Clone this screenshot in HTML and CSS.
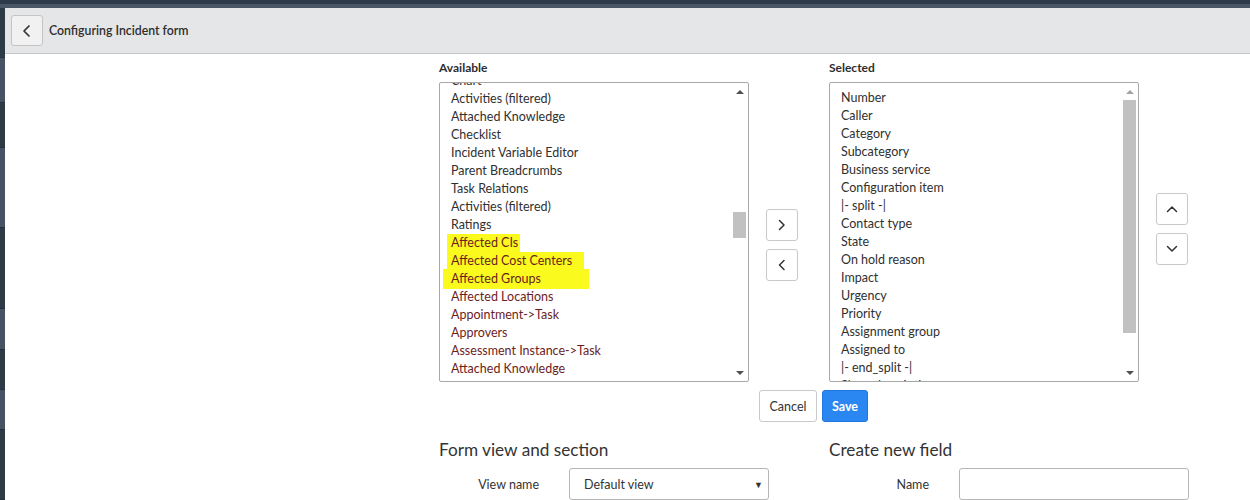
FILE: index.html
```html
<!DOCTYPE html>
<html lang="en">
<head>
  <meta charset="UTF-8" />
  <title>Configuring Incident form</title>
  <link rel="stylesheet" href="styles.css">
</head>
<body>
  <div class="topbar"></div>
  <div class="subbar"></div>
  <div class="page">
    <div class="side-strip">
      <div class="seg dark" style="height:50px"></div>
      <div class="seg light" style="height:45px"></div>
      <div class="seg dark" style="height:45px"></div>
      <div class="seg light" style="height:80px"></div>
      <div class="seg dark" style="height:82px"></div>
      <div class="seg light" style="height:40px"></div>
      <div class="seg dark" style="height:40px"></div>
      <div class="seg light" style="height:40px"></div>
      <div class="seg dark" style="height:70px"></div>
    </div>
    <div class="main">
      <div class="header">
        <button class="back-btn" title="Back">
          <svg width="14" height="14" viewBox="0 0 14 14">
            <polyline points="9,2 4,7 9,12" fill="none" stroke="#333" stroke-width="1.7" stroke-linecap="round" stroke-linejoin="round"/>
          </svg>
        </button>
        <div class="title">Configuring Incident form</div>
      </div>

      <div class="content">
        <div class="slush">
          <div class="col">
            <div class="col-label">Available</div>
            <div class="listbox">
              <div class="list available">
                <div class="item">Chart</div>
                <div class="item">Activities (filtered)</div>
                <div class="item">Attached Knowledge</div>
                <div class="item">Checklist</div>
                <div class="item">Incident Variable Editor</div>
                <div class="item">Parent Breadcrumbs</div>
                <div class="item">Task Relations</div>
                <div class="item">Activities (filtered)</div>
                <div class="item">Ratings</div>
                <div class="item ref"><span class="hl hl-1">Affected CIs</span></div>
                <div class="item ref"><span class="hl hl-2">Affected Cost Centers</span></div>
                <div class="item ref"><span class="hl hl-3">Affected Groups</span></div>
                <div class="item ref">Affected Locations</div>
                <div class="item ref">Appointment-&gt;Task</div>
                <div class="item ref">Approvers</div>
                <div class="item ref">Assessment Instance-&gt;Task</div>
                <div class="item ref">Attached Knowledge</div>
              </div>
              <div class="scrollbar">
                <div class="arrow"><span class="tri-up"></span></div>
                <div class="track"><div class="thumb" style="margin-top:112px;height:26px"></div></div>
                <div class="arrow"><span class="tri-down"></span></div>
              </div>
            </div>
          </div>

          <div class="move-btns mid">
            <button class="icon-btn" title="Add">
              <svg width="12" height="12" viewBox="0 0 12 12"><polyline points="3.5,1.5 8,6 3.5,10.5" fill="none" stroke="#333" stroke-width="1.5" stroke-linecap="round" stroke-linejoin="round"/></svg>
            </button>
            <button class="icon-btn" title="Remove">
              <svg width="12" height="12" viewBox="0 0 12 12"><polyline points="8,1.5 3.5,6 8,10.5" fill="none" stroke="#333" stroke-width="1.5" stroke-linecap="round" stroke-linejoin="round"/></svg>
            </button>
          </div>

          <div class="col">
            <div class="col-label">Selected</div>
            <div class="listbox">
              <div class="list selected">
                <div class="item">Number</div>
                <div class="item">Caller</div>
                <div class="item">Category</div>
                <div class="item">Subcategory</div>
                <div class="item">Business service</div>
                <div class="item">Configuration item</div>
                <div class="item">|- split -|</div>
                <div class="item">Contact type</div>
                <div class="item">State</div>
                <div class="item">On hold reason</div>
                <div class="item">Impact</div>
                <div class="item">Urgency</div>
                <div class="item">Priority</div>
                <div class="item">Assignment group</div>
                <div class="item">Assigned to</div>
                <div class="item">|- end_split -|</div>
                <div class="item">Short description</div>
              </div>
              <div class="scrollbar">
                <div class="arrow"><span class="tri-up off"></span></div>
                <div class="track"><div class="thumb" style="margin-top:0;height:233px"></div></div>
                <div class="arrow"><span class="tri-down"></span></div>
              </div>
            </div>
          </div>

          <div class="move-btns side">
            <button class="icon-btn" title="Move up">
              <svg width="14" height="12" viewBox="0 0 14 12"><polyline points="2.5,8.5 7,4 11.5,8.5" fill="none" stroke="#333" stroke-width="1.5" stroke-linecap="round" stroke-linejoin="round"/></svg>
            </button>
            <button class="icon-btn" title="Move down">
              <svg width="14" height="12" viewBox="0 0 14 12"><polyline points="2.5,3.5 7,8 11.5,3.5" fill="none" stroke="#333" stroke-width="1.5" stroke-linecap="round" stroke-linejoin="round"/></svg>
            </button>
          </div>
        </div>

        <div class="actions">
          <button class="btn">Cancel</button>
          <button class="btn primary">Save</button>
        </div>

        <div class="sections">
          <div class="section">
            <h2>Form view and section</h2>
            <div class="field-row">
              <label>View name</label>
              <div class="select-box">Default view<span class="caret">&#9660;</span></div>
            </div>
          </div>
          <div class="section">
            <h2>Create new field</h2>
            <div class="field-row">
              <label>Name</label>
              <div class="input-box"></div>
            </div>
          </div>
        </div>
      </div>
    </div>
  </div>
</body>
</html>
```

FILE: styles.css
```css
body {
  margin: 0;
  background: #fff;
  font-family: "Lato", "Noto Sans", sans-serif;
  color: #333;
  font-size: 12.5px;
  overflow: hidden;
}
.topbar {
  height: 4px;
  background: #2f3a48;
}
.subbar {
  height: 4px;
  background: #485666;
}
.page {
  display: flex;
  height: 492px;
}
.side-strip {
  width: 5px;
  display: flex;
  flex-direction: column;
}
.seg {
  border-bottom: 1px solid #27313d;
}
.seg.dark {
  background: #2f3a47;
}
.seg.light {
  background: #455365;
}
.main {
  flex: 1;
}
.header {
  height: 45px;
  background: #e5e6e8;
  border-bottom: 1px solid #c6c7c9;
  display: flex;
  align-items: center;
  padding-left: 6px;
}
.back-btn {
  width: 32px;
  height: 31px;
  border: 1px solid #c3c4c6;
  border-radius: 3px;
  background: #f1f1f2;
  padding: 0;
  display: flex;
  align-items: center;
  justify-content: center;
}
.title {
  margin-left: 6px;
  font-weight: 600;
  color: #2e2e2e;
  font-size: 12.3px;
}
.content {
  padding-left: 434px;
  width: 749px;
}
.slush {
  display: flex;
  padding-top: 6px;
}
.col {
  width: 310px;
}
.col-label {
  font-weight: 700;
  font-size: 12px;
  line-height: 16px;
  margin-bottom: 6px;
  color: #2e2e2e;
}
.listbox {
  height: 298px;
  border: 1px solid #a8a8a8;
  border-radius: 2px;
  display: flex;
  overflow: hidden;
}
.list {
  flex: 1;
  overflow: hidden;
  padding-left: 11px;
}
.list.available {
  margin-top: -11px;
}
.list.selected {
  padding-top: 6px;
}
.item {
  line-height: 18px;
  height: 18px;
  white-space: nowrap;
  color: #303030;
}
.item.ref {
  color: #6c1d1d;
}
.hl {
  display: inline-block;
  background: #fafa1f;
  line-height: 18px;
}
.hl-1 {
  padding: 0 2px 0 4px;
  margin-left: -4px;
}
.hl-2 {
  padding: 0 12px 0 4px;
  margin-left: -4px;
}
.hl-3 {
  padding: 1px 48px 1px 8px;
  margin-left: -8px;
  margin-top: -1px;
}
.scrollbar {
  width: 15px;
  margin-right: 1px;
  display: flex;
  flex-direction: column;
}
.arrow {
  height: 17px;
  display: flex;
  align-items: center;
  justify-content: center;
}
.tri-up {
  width: 0;
  height: 0;
  border-left: 4px solid transparent;
  border-right: 4px solid transparent;
  border-bottom: 4px solid #505050;
}
.tri-up.off {
  border-bottom-color: #a3a3a3;
}
.tri-down {
  width: 0;
  height: 0;
  border-left: 4px solid transparent;
  border-right: 4px solid transparent;
  border-top: 4px solid #505050;
}
.track {
  flex: 1;
  display: flex;
  flex-direction: column;
  align-items: center;
}
.thumb {
  width: 13px;
  background: #c1c1c1;
}
.move-btns {
  display: flex;
  flex-direction: column;
  gap: 8px;
  margin-left: 17px;
}
.move-btns.mid {
  width: 63px;
  padding-top: 149px;
}
.move-btns.side {
  padding-top: 133px;
}
.icon-btn {
  width: 32px;
  height: 32px;
  border: 1px solid #c9c9c9;
  border-radius: 3px;
  background: #fff;
  padding: 0;
  display: flex;
  align-items: center;
  justify-content: center;
}
.actions {
  display: flex;
  justify-content: center;
  gap: 5px;
  margin-top: 8px;
}
.btn {
  width: 58px;
  height: 32px;
  padding: 0;
  border: 1px solid #c9c9c9;
  border-radius: 3px;
  background: #fff;
  font-family: inherit;
  font-size: 12.5px;
  color: #333;
}
.btn.primary {
  width: 46px;
  background: #2a87f2;
  border-color: #2277dd;
  color: #fff;
  font-weight: 700;
}
.sections {
  display: flex;
  margin-top: 17px;
}
.section {
  width: 390px;
  flex-shrink: 0;
}
.section h2 {
  margin: 0;
  font-size: 17.2px;
  font-weight: 400;
  line-height: 22px;
  color: #333;
}
.field-row {
  display: flex;
  align-items: center;
  margin-top: 7px;
}
.field-row label {
  width: 100px;
  padding-right: 30px;
  text-align: right;
  color: #333;
}
.select-box {
  width: 184px;
  height: 30px;
  border: 1px solid #b5b5b5;
  border-radius: 3px;
  padding-left: 14px;
  display: flex;
  align-items: center;
  justify-content: space-between;
  color: #333;
}
.caret {
  font-size: 9px;
  margin-right: 5px;
  color: #333;
}
.input-box {
  width: 228px;
  height: 30px;
  border: 1px solid #b5b5b5;
  border-radius: 3px;
}
```
